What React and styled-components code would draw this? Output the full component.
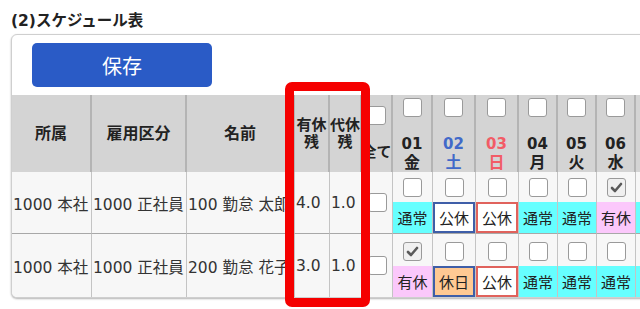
import React from 'react'
import styled, { createGlobalStyle, css } from 'styled-components'

const GlobalStyle = createGlobalStyle`
  html, body {
    margin: 0;
    padding: 0;
    overflow: hidden;
    background: #fff;
  }
  body {
    font-family: "DejaVu Sans", "Noto Sans CJK JP", sans-serif;
    color: #222;
  }
`

const Page = styled.div`
  position: relative;
  width: 640px;
  height: 309px;
  padding: 11px 0 0 11px;
  box-sizing: border-box;
`

const Title = styled.h2`
  margin: 0 0 3px;
  font-size: 15.5px;
  line-height: 20px;
  font-weight: bold;
  color: #222;
`

const Card = styled.div`
  width: 666px;
  background: #fff;
  border: 1px solid #cfcfcf;
  border-radius: 6px;
  box-shadow: 0 1px 2px rgba(0, 0, 0, 0.3);
  overflow: hidden;
`

const Toolbar = styled.div`
  display: flex;
  padding: 8px 0 8px 20px;
`

const SaveButton = styled.button`
  width: 180px;
  height: 44px;
  border: none;
  border-radius: 5px;
  background: #2a5bc6;
  color: #fff;
  font-family: "Noto Sans CJK JP", sans-serif;
  font-size: 20px;
  cursor: pointer;
`

const Table = styled.table`
  table-layout: fixed;
  border-collapse: separate;
  border-spacing: 0;
  width: 664px;
`

const HeadRow = styled.tr`
  height: 77px;
`

const Th = styled.th`
  background: #d4d4d4;
  border-right: 2px solid #b4b4b4;
  padding: 0;
  font-size: ${p => p.$narrow ? 15 : 16}px;
  line-height: 17px;
  font-weight: bold;
  text-align: center;
  vertical-align: middle;
  white-space: ${p => p.$nowrap ? 'nowrap' : 'normal'};
  color: ${p => p.$tone === 'sat' ? '#4169c9' : p.$tone === 'sun' ? '#f25c66' : '#222'};
`

const HeadStack = styled.div`
  display: flex;
  flex-direction: column;
  align-items: center;
`

const DayNum = styled.span`
  font-size: 15px;
  line-height: 17px;
`

const WeekDay = styled.span`
  font-family: "Noto Sans CJK JP", sans-serif;
  font-size: 16px;
  line-height: 17px;
`

const BodyRow = styled.tr`
  height: ${p => p.$last ? 63 : 62}px;
`

const Td = styled.td`
  background: #f7f7f7;
  border-right: 1px solid #c4c4c4;
  border-bottom: ${p => p.$last ? 'none' : '1px solid #a8a8a8'};
  padding: 0 0 0 1px;
  font-size: 15.5px;
  color: #333;
  white-space: nowrap;
  overflow: hidden;
  vertical-align: middle;
  text-align: left;
`

const DayTd = styled(Td)`
  padding: 0;
  vertical-align: bottom;
`

const CenterTd = styled(Td)`
  padding: 0;
`

const Box = styled.span`
  display: block;
  box-sizing: border-box;
  width: 19px;
  height: 19px;
  border: 1px solid #9a9a9a;
  border-radius: 3px;
  background: ${p => p.$checked ? '#f0f0f0' : '#fff'};
  margin: ${p => p.$gap || '0 auto'};
  position: relative;

  svg {
    position: absolute;
    left: 2px;
    top: 2px;
  }
`

const labelKinds = {
  normal: css`background: #66ffff;`,
  paid: css`background: #fbc8fb;`,
  holiday: css`background: #ffc993; border: 2px solid #3e5ea8;`,
  sat: css`background: #fff; border: 2px solid #3e5ea8;`,
  sun: css`background: #fff; border: 2px solid #e0625c;`,
}

const DayLabel = styled.div`
  box-sizing: border-box;
  height: 31px;
  display: flex;
  align-items: center;
  justify-content: center;
  font-family: "Noto Sans CJK JP", sans-serif;
  font-size: 15px;
  color: #222;
  ${p => labelKinds[p.$kind]}
`

const Highlight = styled.div`
  position: absolute;
  left: 285px;
  top: 82px;
  width: 85px;
  height: 225px;
  box-sizing: border-box;
  border: 9px solid #f50000;
  border-radius: 7px;
  z-index: 2;
  pointer-events: none;
`

const Check = ({ checked, gap }) => (
  <Box $checked={checked} $gap={gap}>
    {checked && (
      <svg width="13" height="13" viewBox="0 0 13 13">
        <path d="M2 7 L5 10 L11 3" fill="none" stroke="#5a5a5a" strokeWidth="2.6" strokeLinecap="round" strokeLinejoin="round"/>
      </svg>
    )}
  </Box>
)

const days = [
  { d: '01', w: '金' },
  { d: '02', w: '土', tone: 'sat' },
  { d: '03', w: '日', tone: 'sun' },
  { d: '04', w: '月' },
  { d: '05', w: '火' },
  { d: '06', w: '水' },
  { d: '07', w: '木' },
]

const labelText = { normal: '通常', paid: '有休', holiday: '休日', sat: '公休', sun: '公休' }

const rows = [
  {
    dept: '1000 本社', type: '1000 正社員', name: '100 勤怠 太郎', paid: '4.0', comp: '1.0',
    cells: [
      { k: 'normal' }, { k: 'sat' }, { k: 'sun' }, { k: 'normal' }, { k: 'normal' },
      { k: 'paid', checked: true }, { k: 'normal' },
    ],
  },
  {
    dept: '1000 本社', type: '1000 正社員', name: '200 勤怠 花子', paid: '3.0', comp: '1.0',
    cells: [
      { k: 'paid', checked: true }, { k: 'holiday' }, { k: 'sun' }, { k: 'normal' },
      { k: 'normal' }, { k: 'normal' }, { k: 'normal' },
    ],
  },
]

const widths = [80, 95, 108, 35, 32, 31, 40, 43, 43, 39, 39, 39, 40]

export default function App() {
  return (
    <>
      <GlobalStyle/>
      <Page>
        <Title>(2)スケジュール表</Title>
        <Card>
          <Toolbar>
            <SaveButton>保存</SaveButton>
          </Toolbar>
          <Table>
            <colgroup>
              {widths.map((w, i) => <col key={i} style={{ width: w }}/>)}
            </colgroup>
            <thead>
              <HeadRow>
                <Th>所属</Th>
                <Th>雇用区分</Th>
                <Th>名前</Th>
                <Th $narrow>有休残</Th>
                <Th $narrow>代休残</Th>
                <Th $narrow $nowrap>
                  <HeadStack>
                    <Check gap="0 0 19px"/>
                    <span>全て</span>
                  </HeadStack>
                </Th>
                {days.map(day => (
                  <Th key={day.d} $narrow $tone={day.tone}>
                    <HeadStack>
                      <Check gap="0 0 19px"/>
                      <DayNum>{day.d}</DayNum>
                      <WeekDay>{day.w}</WeekDay>
                    </HeadStack>
                  </Th>
                ))}
              </HeadRow>
            </thead>
            <tbody>
              {rows.map((row, ri) => {
                const last = ri === rows.length - 1
                return (
                  <BodyRow key={ri} $last={last}>
                    <Td $last={last}>{row.dept}</Td>
                    <Td $last={last}>{row.type}</Td>
                    <Td $last={last}>{row.name}</Td>
                    <Td $last={last}>{row.paid}</Td>
                    <Td $last={last}>{row.comp}</Td>
                    <CenterTd $last={last}><Check/></CenterTd>
                    {row.cells.map((c, ci) => (
                      <DayTd key={ci} $last={last}>
                        <Check checked={c.checked} gap="0 auto 5px"/>
                        <DayLabel $kind={c.k}>{labelText[c.k]}</DayLabel>
                      </DayTd>
                    ))}
                  </BodyRow>
                )
              })}
            </tbody>
          </Table>
        </Card>
        <Highlight/>
      </Page>
    </>
  )
}
